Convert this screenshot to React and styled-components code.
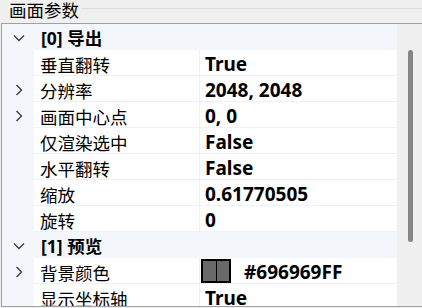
import React from "react";
import styled, { createGlobalStyle } from "styled-components";

const Global = createGlobalStyle`
  html, body { margin: 0; padding: 0; background: #f0f0f0; }
  body { font-family: "Noto Sans", "Noto Sans CJK SC", sans-serif; }
`;

const Frame = styled.div`
  width: 422px;
  height: 308px;
  overflow: hidden;
  background: #f0f0f0;
`;

const TitleBar = styled.div`
  display: flex;
  align-items: flex-start;
  height: 23px;
`;

const Title = styled.div`
  font-family: "Noto Sans CJK SC", sans-serif;
  font-size: 17.5px;
  line-height: 19px;
  padding-left: 9px;
  padding-right: 2px;
  color: #000;
`;

const TitleLine = styled.div`
  flex: 1;
  margin-top: 8px;
  border-top: 1px solid #dcdcdc;
`;

const Panel = styled.div`
  display: flex;
  margin-left: 1px;
  height: 282px;
  border: 1px solid #a0a0a0;
  border-right: 0;
`;

const Grid = styled.div`
  width: 395px;
  overflow: hidden;
  background: #fff;
`;

const Row = styled.div`
  display: grid;
  grid-template-columns: 32px 166px 1fr;
  height: 26px;
  box-sizing: border-box;
  background: ${(p) => (p.$group ? "#f3f6fb" : "#fff")};
`;

const Gutter = styled.div`
  background: #f3f6fb;
  display: flex;
  align-items: center;
  justify-content: center;
  padding-left: 2px;
  padding-top: 1px;
  color: #404040;
`;

const Label = styled.div`
  font-family: "Noto Sans CJK SC", sans-serif;
  font-size: 17.5px;
  line-height: 25px;
  padding-left: 6px;
  padding-top: 2px;
  height: 23px;
  white-space: nowrap;
  border-bottom: 1px solid #eef1f7;
  border-right: 1px solid #eef1f7;
`;

const GroupLabel = styled.div`
  grid-column: 2 / 4;
  font-family: "Noto Sans", "Noto Sans CJK SC", sans-serif;
  font-weight: 700;
  font-size: 17.5px;
  line-height: 26px;
  padding-left: 7px;
  padding-top: 1px;
  white-space: nowrap;
`;

const Value = styled.div`
  display: flex;
  align-items: center;
  gap: 13px;
  font-family: "Noto Sans", sans-serif;
  font-weight: 700;
  font-size: 19px;
  line-height: 25px;
  padding-left: 5px;
  padding-top: 3px;
  height: 22px;
  white-space: nowrap;
  border-bottom: 1px solid #eef1f7;
`;

const Swatch = styled.div`
  display: flex;
  gap: 1px;
  width: 30px;
  height: 24px;
  margin-left: -4px;
  margin-top: -2px;
  box-sizing: border-box;
  border: 2px solid #000;
  background: #000;
  span {
    flex: 1;
    background: #696969;
  }
`;

const ScrollTrack = styled.div`
  flex: 1;
  background: #f0f0f0;
  padding-top: 26px;
  padding-left: 11px;
`;

const Thumb = styled.div`
  width: 5px;
  height: 192px;
  border-radius: 3px;
  background: #858585;
`;

const Chevron = ({ open }) => (
  <svg width="12" height="12" viewBox="0 0 12 12">
    {open ? (
      <polyline points="1,3.5 6,8.5 11,3.5" fill="none" stroke="#3c3c3c" strokeWidth="1.4" />
    ) : (
      <polyline points="3.5,1 8.5,6 3.5,11" fill="none" stroke="#3c3c3c" strokeWidth="1.4" />
    )}
  </svg>
);

const sections = [
  {
    name: "[0] 导出",
    items: [
      { label: "垂直翻转", value: "True" },
      { label: "分辨率", value: "2048, 2048", more: true },
      { label: "画面中心点", value: "0, 0", more: true },
      { label: "仅渲染选中", value: "False" },
      { label: "水平翻转", value: "False" },
      { label: "缩放", value: "0.61770505" },
      { label: "旋转", value: "0" },
    ],
  },
  {
    name: "[1] 预览",
    items: [
      { label: "背景颜色", value: "#696969FF", more: true, color: true },
      { label: "显示坐标轴", value: "True" },
    ],
  },
];

export default function App() {
  return (
    <Frame>
      <Global />
      <TitleBar>
        <Title>画面参数</Title>
        <TitleLine />
      </TitleBar>
      <Panel>
        <Grid>
          {sections.map((s) => (
            <React.Fragment key={s.name}>
              <Row $group>
                <Gutter>
                  <Chevron open />
                </Gutter>
                <GroupLabel>{s.name}</GroupLabel>
              </Row>
              {s.items.map((it) => (
                <Row key={it.label}>
                  <Gutter>{it.more && <Chevron />}</Gutter>
                  <Label>{it.label}</Label>
                  <Value>
                    {it.color && (
                      <Swatch>
                        <span />
                        <span />
                      </Swatch>
                    )}
                    {it.value}
                  </Value>
                </Row>
              ))}
            </React.Fragment>
          ))}
        </Grid>
        <ScrollTrack>
          <Thumb />
        </ScrollTrack>
      </Panel>
    </Frame>
  );
}
